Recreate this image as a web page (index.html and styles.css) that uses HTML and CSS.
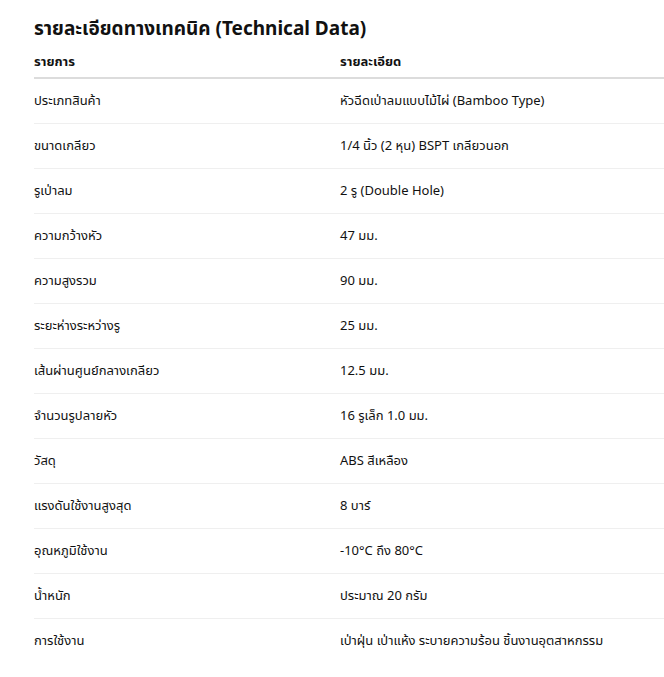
FILE: index.html
```html
<!DOCTYPE html>
<html lang="th">
<head>
<meta charset="utf-8">
<link rel="stylesheet" href="styles.css">
</head>
<body>
<div class="page">
<h2 class="title">รายละเอียดทางเทคนิค (Technical Data)</h2>
<table class="spec">
<thead>
<tr><th>รายการ</th><th>รายละเอียด</th></tr>
</thead>
<tbody>
<tr><td>ประเภทสินค้า</td><td>หัวฉีดเป่าลมแบบไม้ไผ่ (Bamboo Type)</td></tr>
<tr><td>ขนาดเกลียว</td><td>1/4 นิ้ว (2 หุน) BSPT เกลียวนอก</td></tr>
<tr><td>รูเป่าลม</td><td>2 รู (Double Hole)</td></tr>
<tr><td>ความกว้างหัว</td><td>47 มม.</td></tr>
<tr><td>ความสูงรวม</td><td>90 มม.</td></tr>
<tr><td>ระยะห่างระหว่างรู</td><td>25 มม.</td></tr>
<tr><td>เส้นผ่านศูนย์กลางเกลียว</td><td>12.5 มม.</td></tr>
<tr><td>จำนวนรูปลายหัว</td><td>16 รูเล็ก 1.0 มม.</td></tr>
<tr><td>วัสดุ</td><td>ABS สีเหลือง</td></tr>
<tr><td>แรงดันใช้งานสูงสุด</td><td>8 บาร์</td></tr>
<tr><td>อุณหภูมิใช้งาน</td><td>-10°C ถึง 80°C</td></tr>
<tr><td>น้ำหนัก</td><td>ประมาณ 20 กรัม</td></tr>
<tr><td>การใช้งาน</td><td>เป่าฝุ่น เป่าแห้ง ระบายความร้อน ชิ้นงานอุตสาหกรรม</td></tr>
</tbody>
</table>
</div>
</body>
</html>
```
FILE: styles.css
```css
html, body {
  margin: 0;
  padding: 0;
  background: #fff;
}
body {
  font-family: "Noto Sans", "Noto Sans Thai", "DejaVu Sans", sans-serif;
  color: #111;
  overflow: hidden;
}
.page {
  padding: 16px 0 0 34px;
}
.title {
  margin: 0 0 7px 0;
  font-size: 19px;
  line-height: 24px;
  font-weight: 700;
  color: #111;
}
.spec {
  border-collapse: collapse;
  width: 640px;
  font-size: 13px;
}
.spec th, .spec td {
  text-align: left;
  padding: 0;
  height: 44px;
  vertical-align: middle;
}
.spec th {
  font-weight: 700;
  height: 30px;
  border-bottom: 2px solid #dcdcdc;
}
.spec td {
  border-bottom: 1px solid #efefef;
}
.spec tr:last-child td {
  border-bottom: none;
}
.spec th:first-child, .spec td:first-child {
  width: 306px;
}
```
